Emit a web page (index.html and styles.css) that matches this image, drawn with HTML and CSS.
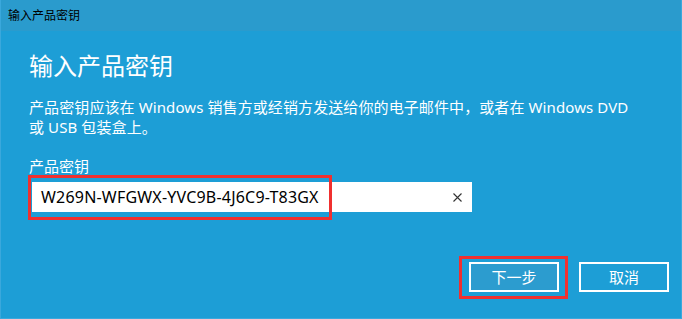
FILE: index.html
```html
<!DOCTYPE html>
<html lang="zh-CN">
<head>
<meta charset="UTF-8">
<meta name="viewport" content="width=device-width, initial-scale=1.0">
<title>输入产品密钥</title>
<link rel="stylesheet" href="styles.css">
</head>
<body>
    <div class="dialog">
        <!-- 标题栏 -->
        <div class="titlebar">输入产品密钥</div>
        <div class="content">
            <h1 class="heading">输入产品密钥</h1>
            <p class="desc">产品密钥应该在 Windows 销售方或经销方发送给你的电子邮件中，或者在 Windows DVD<br>或 USB 包装盒上。</p>
            <div class="label">产品密钥</div>
            <div class="key-field">
                <span class="key-text">W269N-WFGWX-YVC9B-4J6C9-T83GX</span>
                <svg class="clear" width="9" height="9" viewBox="0 0 9 9">
                    <path d="M0.5 0.5 L8.5 8.5 M8.5 0.5 L0.5 8.5" stroke="#333" stroke-width="1.1" fill="none"/>
                </svg>
                <div class="mark mark-key"></div>
            </div>
        </div>
        <!-- 하단 버튼 -->
        <div class="footer">
            <div class="btn btn-next">下一步<div class="mark mark-btn"></div></div>
            <div class="btn">取消</div>
        </div>
    </div>
</body>
</html>
```

FILE: styles.css
```css
body{
    margin: 0;
    font-family: "Noto Sans", "Noto Sans CJK SC", sans-serif;
}
.dialog{
    width: 680px;
    height: 318px;
    background: #1d9ed6;
    border: 1px solid #3aa8dc;
    border-top: none;
    color: #fff;
}
.titlebar{
    height: 31px;
    line-height: 31px;
    padding-left: 7px;
    background: #2a9bcd;
    color: #000;
    font-size: 12px;
}
.content{
    padding-left: 28px;
}
.heading{
    margin: 19px 0 0 0;
    font-size: 24px;
    font-weight: normal;
    line-height: 32px;
}
.desc{
    margin: 15px 0 0 0;
    font-size: 15px;
    line-height: 20px;
    letter-spacing: 0.1px;
}
.label{
    margin-top: 19px;
    font-size: 15px;
    line-height: 20px;
}
/* 입력칸 */
.key-field{
    position: relative;
    margin-top: 6px;
    margin-left: 3px;
    width: 440px;
    height: 30px;
    background: #fff;
    display: flex;
    align-items: center;
}
.key-text{
    padding-left: 9px;
    color: #000;
    font-size: 16px;
    letter-spacing: 0.2px;
    flex: 1;
}
.clear{
    margin-right: 10px;
}
/* 빨간 표시 상자 */
.mark{
    position: absolute;
    border: 3px solid #f0302f;
}
.mark-key{
    left: -4px;
    top: -7px;
    width: 298px;
    height: 39px;
}
.footer{
    display: flex;
    justify-content: flex-end;
    gap: 20px;
    margin-top: 50px;
    padding-right: 12px;
}
.btn{
    position: relative;
    width: 86px;
    height: 26px;
    border: 2px solid #fff;
    font-size: 15px;
    line-height: 26px;
    text-align: center;
}
.btn-next{
    background: #2c9ccf;
}
.mark-btn{
    left: -12px;
    top: -8px;
    width: 103px;
    height: 37px;
}
```
